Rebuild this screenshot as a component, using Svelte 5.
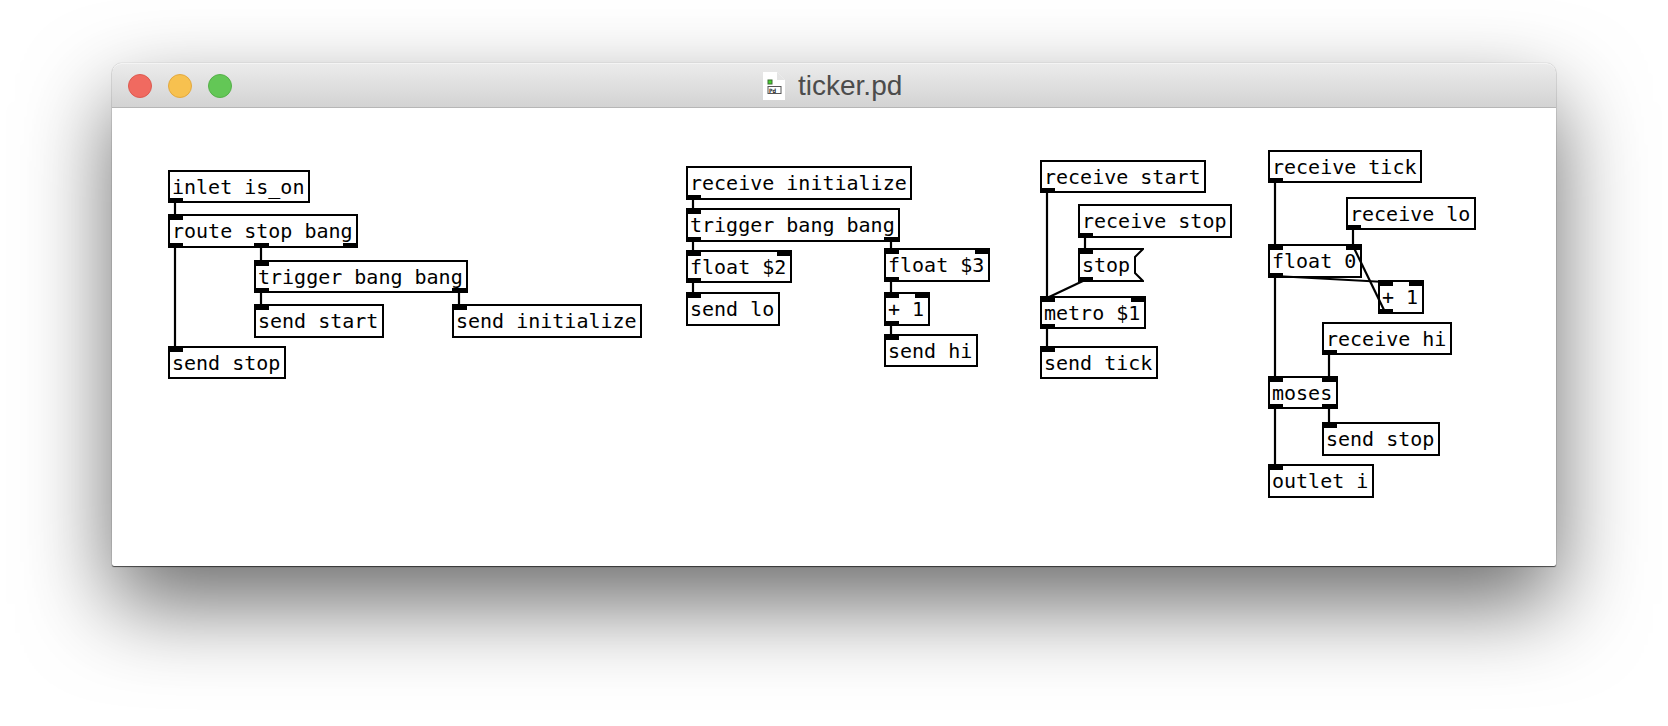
<script>
  // id: [text, x, y, w, h, inlets, outlets, isMessage]
  const nodes = {
    a: ["inlet is_on", 56, 63, 142, 33, 0, 1],
    b: ["route stop bang", 56, 107, 190, 34, 1, [0, 86, 175]],
    c: ["trigger bang bang", 142, 153, 214, 33, 1, [0, 198]],
    d: ["send start", 142, 197, 130, 34, 1, 0],
    e: ["send initialize", 340, 197, 190, 34, 1, 0],
    f: ["send stop", 56, 239, 118, 33, 1, 0],
    g: ["receive initialize", 574, 59, 226, 34, 0, 1],
    h: ["trigger bang bang", 574, 101, 214, 34, 1, [0, 198]],
    i: ["float $2", 574, 143, 106, 33, 2, 1],
    j: ["send lo", 574, 185, 94, 34, 1, 0],
    k: ["float $3", 772, 141, 106, 34, 2, 1],
    l: ["+ 1", 772, 185, 46, 34, 2, 1],
    m: ["send hi", 772, 227, 94, 33, 1, 0],
    n: ["receive start", 928, 53, 166, 33, 0, 1],
    o: ["receive stop", 966, 97, 154, 34, 0, 1],
    p: ["stop", 966, 141, 66, 34, 1, 1, true],
    q: ["metro $1", 928, 189, 106, 33, 2, 1],
    r: ["send tick", 928, 239, 118, 33, 1, 0],
    s: ["receive tick", 1156, 43, 154, 33, 0, 1],
    t: ["receive lo", 1234, 90, 130, 33, 0, 1],
    u: ["float 0", 1156, 137, 94, 34, [0, 78], 1],
    v: ["+ 1", 1266, 173, 46, 34, 2, 1],
    w: ["receive hi", 1210, 215, 130, 33, 0, 1],
    x: ["moses", 1156, 269, 70, 33, [0, 54], [0, 54]],
    y: ["send stop", 1210, 315, 118, 34, 1, 0],
    z: ["outlet i", 1156, 357, 106, 34, 1, 0]
  }

  // from, outlet, to, inlet
  const wires = [
    ["a", 0, "b", 0], ["b", 0, "f", 0], ["b", 1, "c", 0], ["c", 0, "d", 0], ["c", 1, "e", 0],
    ["g", 0, "h", 0], ["h", 0, "i", 0], ["h", 1, "k", 0], ["i", 0, "j", 0], ["k", 0, "l", 0], ["l", 0, "m", 0],
    ["n", 0, "q", 0], ["o", 0, "p", 0], ["p", 0, "q", 0], ["q", 0, "r", 0],
    ["s", 0, "u", 0], ["t", 0, "u", 1], ["u", 0, "v", 0], ["v", 0, "u", 1], ["u", 0, "x", 0],
    ["w", 0, "x", 1], ["x", 0, "z", 0], ["x", 1, "y", 0]
  ]

  const PORT = 15

  // ports are spread evenly unless the node lists its own offsets
  const ports = (w, p) =>
    Array.isArray(p)
      ? p
      : Array.from({ length: p }, (_, i) => (p < 2 ? 0 : ((w - PORT) * i) / (p - 1)))

  const wireLine = ([from, outlet, to, inlet]) => {
    const a = nodes[from]
    const b = nodes[to]
    return {
      x1: a[1] + ports(a[3], a[6])[outlet] + 7,
      y1: a[2] + a[4] - 2,
      x2: b[1] + ports(b[3], b[5])[inlet] + 7,
      y2: b[2] + 2
    }
  }
</script>

<div class="page">
  <div class="window">
    <div class="titlebar">
      <div class="lights">
        <span class="light red"></span>
        <span class="light yellow"></span>
        <span class="light green"></span>
      </div>
      <div class="title">
        <svg class="doc" width="22" height="28" viewBox="0 0 22 28">
          <path d="M0 0 H14 L22 8 V28 H0 Z" fill="#fff" />
          <path d="M14 0 L22 8 H14 Z" fill="#e4e4e4" />
          <rect x="5" y="8" width="4" height="4" fill="#46d22e" stroke="#3c6b34" />
          <rect x="5" y="14.5" width="13" height="7" fill="#fff" stroke="#555" />
          <text x="6" y="20.5" class="doc-label">Pd</text>
        </svg>
        <span>ticker.pd</span>
      </div>
    </div>
    <div class="canvas">
      {#each Object.values(nodes) as [text, x, y, w, h, inlets, outlets, msg]}
        <div
          class="node"
          class:msg
          style="left:{x}px;top:{y}px;width:{w}px;height:{h}px"
        >
          {#if msg}
            <svg class="flag" width={w} height={h} viewBox="0 0 {w} {h}">
              <path d="M1 1 H{w - 1} L{w - 9} 9 V{h - 9} L{w - 1} {h - 1} H1 Z" />
            </svg>
          {/if}
          <span class="label">{text}</span>
          {#each ports(w, inlets) as left}
            <i class="port in" style="left:{left}px"></i>
          {/each}
          {#each ports(w, outlets) as left}
            <i class="port out" style="left:{left}px"></i>
          {/each}
        </div>
      {/each}
      <svg class="wires" width="1444" height="459">
        {#each wires.map(wireLine) as l}
          <line x1={l.x1} y1={l.y1} x2={l.x2} y2={l.y2} />
        {/each}
      </svg>
    </div>
  </div>
</div>

<style>
  .page {
    height: 726px;
    box-sizing: border-box;
    padding: 63px 0 0 112px;
    background: #fff;
    overflow: hidden;
  }

  .window {
    width: 1444px;
    height: 503px;
    border-radius: 10px 10px 2px 2px;
    display: flex;
    flex-direction: column;
    background: #fff;
    box-shadow:
      0 1px 1px rgba(0, 0, 0, 0.6),
      0 0 1px rgba(0, 0, 0, 0.45),
      0 38px 88px rgba(0, 0, 0, 0.58);
  }

  /* Title bar */
  .titlebar {
    height: 45px;
    flex: none;
    box-sizing: border-box;
    display: flex;
    align-items: center;
    position: relative;
    background: linear-gradient(#ebebeb, #d3d3d3);
    border-top: 1px solid #f4f4f4;
    border-bottom: 1px solid #b6b6b6;
    border-radius: 10px 10px 0 0;
  }
  .lights {
    display: flex;
    gap: 16px;
    padding-left: 16px;
  }
  .light {
    width: 24px;
    height: 24px;
    box-sizing: border-box;
    border-radius: 50%;
    border: 1px solid;
  }
  .red {
    background: #f06a60;
    border-color: #dd5a50;
  }
  .yellow {
    background: #f7c14f;
    border-color: #e3a93f;
  }
  .green {
    background: #63c756;
    border-color: #55b049;
  }
  .title {
    position: absolute;
    left: 651px;
    top: 7px;
    display: flex;
    align-items: center;
    gap: 13px;
    font-family: "Liberation Sans", sans-serif;
    font-size: 28px;
    line-height: 30px;
    color: #4c4c4c;
  }
  .doc-label {
    font-family: "DejaVu Sans Mono", monospace;
    font-size: 6px;
    font-weight: 700;
    fill: #222;
  }

  /* Patch canvas */
  .canvas {
    flex: 1;
    position: relative;
    margin-top: -1px;
  }
  .node {
    position: absolute;
    box-sizing: border-box;
    border: 2px solid #000;
    background: #fff;
    font-family: "DejaVu Sans Mono", monospace;
    font-size: 20px;
    line-height: 30px;
    color: #000;
  }
  .node.msg {
    border: 0;
    background: none;
  }
  .label {
    position: relative;
    display: block;
    padding-left: 2px;
    white-space: pre;
  }
  .msg .label {
    padding-left: 4px;
    line-height: 34px;
  }
  .flag {
    position: absolute;
    left: 0;
    top: 0;
  }
  .flag path {
    fill: #fff;
    stroke: #000;
    stroke-width: 2;
  }
  .port {
    position: absolute;
    width: 15px;
    background: #000;
    margin-left: -2px;
  }
  .msg .port {
    margin-left: 0;
  }
  .port.in {
    top: -2px;
    height: 6px;
  }
  .port.out {
    bottom: -2px;
    height: 5px;
  }
  .msg .port.in {
    top: 0;
  }
  .msg .port.out {
    bottom: 0;
  }
  .wires {
    position: absolute;
    left: 0;
    top: 0;
    pointer-events: none;
  }
  .wires line {
    stroke: #000;
    stroke-width: 2.2;
  }
</style>
